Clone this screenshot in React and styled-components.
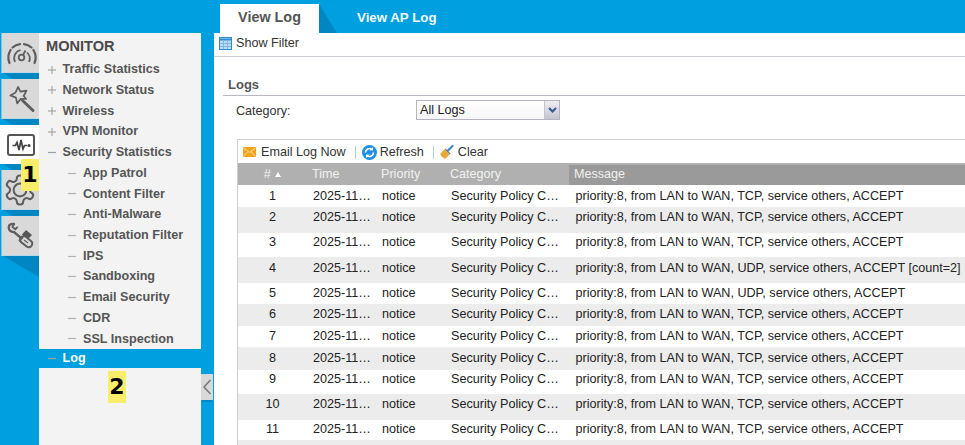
import React from "react";
import styled, { createGlobalStyle } from "styled-components";

const Global = createGlobalStyle`
  html, body { margin: 0; padding: 0; background: #009fdf; }
  * { box-sizing: border-box; }
  body { font-family: "Liberation Sans", Arial, sans-serif; font-size: 12.6px; }
`;

const Page = styled.div`
  position: relative;
  width: 965px;
  height: 445px;
  overflow: hidden;
  background: #009fdf;
  display: flex;
  flex-direction: column;
`;

const TabBar = styled.div`
  height: 33px;
  padding: 4px 0 0 220px;
  display: flex;
  flex: none;
`;

const ActiveTab = styled.div`
  position: relative;
  width: 99px;
  background: #fff;
  color: #555;
  font-weight: 700;
  font-size: 14.4px;
  line-height: 27px;
  text-align: center;
  &::after {
    content: "";
    position: absolute;
    left: 100%;
    top: 0;
    width: 18px;
    height: 29px;
    background: #0086c2;
    clip-path: polygon(0 0, 100% 100%, 0 100%);
  }
`;

const Tab = styled.div`
  margin-left: 38px;
  color: #f2fbff;
  font-weight: 700;
  font-size: 13.3px;
  line-height: 27px;
`;

const Body = styled.div`
  flex: 1;
  display: flex;
  min-height: 0;
`;

const Sidebar = styled.aside`
  width: 214px;
  flex: none;
  display: flex;
`;

const Rail = styled.nav`
  width: 39px;
  flex: none;
  display: flex;
  flex-direction: column;
`;

const Tile = styled.div`
  height: ${(p) => p.$h || 40}px;
  margin-left: ${(p) => (p.$active ? 0 : 1)}px;
  background: ${(p) => (p.$active ? "#fff" : "#d9d9d9")};
  border-left: ${(p) => (p.$active ? "none" : "1px solid #74c6e6")};
  border-bottom: ${(p) => (p.$active ? "none" : "1px solid #b9d9e6")};
  display: block;
  svg { display: block; }
`;

const Fold = styled.div`
  height: ${(p) => p.$h}px;
  margin-left: 3px;
  background: #0086c2;
  clip-path: polygon(0 0, 100% 0, 100% 100%, ${(p) => (p.$h > 10 ? "100%" : "10px")} 100%);
`;

const Menu = styled.div`
  width: 162px;
  flex: none;
  display: flex;
  flex-direction: column;
`;

const MenuTop = styled.div`
  background: #f3f3f3;
  height: 316px;
  padding-top: 3px;
`;

const MenuTitle = styled.div`
  height: 23.2px;
  padding-left: 7px;
  font-size: 14.6px;
  font-weight: 700;
  line-height: 21px;
  color: #4a4a4a;
`;

const MenuRow = styled.div`
  height: 20.72px;
  line-height: 20.72px;
  display: flex;
  align-items: center;
  padding-left: ${(p) => (p.$sub ? 29 : 9)}px;
  color: #555;
  font-weight: 700;
  font-size: 12.6px;
`;

const MenuLog = styled(MenuRow)`
  height: 19px;
  line-height: 19px;
  color: #fff;
`;

const Sign = styled.span`
  width: ${(p) => (p.$sub ? 15 : 14.5)}px;
  flex: none;
  font-weight: 400;
  display: flex;
  svg { display: block; }
`;

const MenuRest = styled.div`
  flex: 1;
  background: #f3f3f3;
`;

const CollapseColumn = styled.div`
  width: 13px;
  flex: none;
  padding-top: 341px;
  padding-right: 1px;
`;

const Collapse = styled.div`
  width: 12px;
  height: 26px;
  background: #d9d9d9;
  box-shadow: 0 3px 0 -1px #0086c2;
  svg { display: block; }
`;

const Main = styled.main`
  flex: 1;
  min-width: 0;
  background: #fff;
  overflow: hidden;
`;

const FilterBar = styled.div`
  height: 24px;
  border-bottom: 1px solid #cfcfd6;
  display: flex;
  align-items: center;
  gap: 4px;
  padding: 0 0 3px 5px;
  color: #333;
`;

const Section = styled.h2`
  margin: 20px 0 0 9px;
  padding: 0 0 3px 5px;
  height: 15px;
  box-sizing: content-box;
  border-bottom: 1px solid #b9b9c6;
  font-size: 13px;
  line-height: 15px;
  font-weight: 700;
  color: #555;
`;

const FormRow = styled.div`
  display: flex;
  align-items: flex-start;
  padding: 4px 0 0 22px;
  height: 24px;
  color: #333;
`;

const Label = styled.label`
  width: 180px;
  flex: none;
  line-height: 22px;
`;

const SelectBox = styled.div`
  width: 144px;
  height: 20px;
  display: flex;
  border: 1px solid #b4b4c4;
  background: linear-gradient(#fff, #f6f6f6);
  color: #222;
  line-height: 18px;
  padding-left: 3px;
`;

const SelectValue = styled.span`
  flex: 1;
`;

const SelectArrow = styled.span`
  width: 15px;
  border-left: 1px solid #c4c4d0;
  background: linear-gradient(#eeeef2, #c4c4cc);
  display: flex;
  align-items: center;
  justify-content: center;
`;

const Grid = styled.section`
  margin: 19px 0 0 23px;
  width: 760px;
  border-top: 1px solid #cfcfcf;
  border-left: 1px solid #cfcfcf;
`;

const GridTools = styled.div`
  height: 23px;
  display: flex;
  align-items: center;
  padding: 1px 0 0 5px;
  color: #333;
`;

const Tool = styled.span`
  display: flex;
  align-items: center;
  gap: ${(p) => p.$gap || 5}px;
  svg { display: block; }
`;

const Sep = styled.span`
  width: 1px;
  height: 13px;
  background: #a9cfe6;
  margin: 0 6px 0 9px;
`;

const COLS = "69px 69px 69px 124px 1fr";

const HeaderRow = styled.div`
  height: 22px;
  display: grid;
  grid-template-columns: ${COLS};
  background: #b0b0b0;
  padding-top: 2px;
  line-height: 19px;
`;

const HeaderCell = styled.div`
  color: #f0f0f0;
  padding-left: ${(p) => (p.$center ? 0 : 5)}px;
  text-align: ${(p) => (p.$center ? "center" : "left")};
  background: ${(p) => (p.$sorted ? "#9a9a9a" : "transparent")};
`;

const Arrow = styled.span`
  display: inline-block;
  margin-left: 1px;
  width: 0;
  height: 0;
  border: 3px solid transparent;
  border-bottom: 5px solid #fff;
  border-top: 0;
  vertical-align: 1px;
`;

const Row = styled.div`
  height: ${(p) => p.$h}px;
  padding-top: ${(p) => p.$top}px;
  display: grid;
  grid-template-columns: ${COLS};
  background: ${(p) => (p.$even ? "#ececec" : "#fff")};
  color: #222;
  line-height: 17px;
`;

const Cell = styled.div`
  padding: 0 4px 0 ${(p) => p.$left ?? 6}px;
  white-space: nowrap;
  overflow: hidden;
  text-overflow: ellipsis;
  text-align: ${(p) => (p.$center ? "center" : "left")};
`;

const Badge = styled.div`
  position: absolute;
  left: ${(p) => p.$x}px;
  top: ${(p) => p.$y}px;
  width: 18px;
  height: 32px;
  background: #f9ee6a;
  color: #000;
  font-family: "DejaVu Sans", sans-serif;
  font-weight: 700;
  font-size: 22px;
  line-height: 32px;
  text-align: center;
`;

const Plus = () => (
  <svg width="8" height="8" viewBox="0 0 8 8"><path d="M0 4h8M4 0v8" stroke="#999" strokeWidth="1" /></svg>
);
const Dash = ({ light, w = 8 }) => (
  <svg width={w} height="3" viewBox={`0 0 ${w} 3`}><path d={`M0 1.5h${w}`} stroke={light ? "#b5b5b5" : "#a0a0a0"} strokeWidth="1.2" /></svg>
);

const GaugeIcon = () => (
  <svg width="38" height="39" viewBox="0 0 38 39" fill="none" stroke="#5e5e5e" strokeWidth="2.2">
    <path d="M7.5 30A14 14 0 0 1 8.6 17M10.5 14.5A14 14 0 0 1 18 11.1M22 11.1A14 14 0 0 1 29.5 14.5M31.4 17A14 14 0 0 1 32.5 30" strokeLinecap="round" />
    <path d="M13 29A8.5 8.5 0 0 1 18.5 17M25 19.5A8.5 8.5 0 0 1 27 29" strokeWidth="1.7" />
    <circle cx="19.5" cy="24.5" r="2.8" strokeWidth="1.8" />
    <path d="M21 22l2.5-4.5" strokeWidth="1.8" />
  </svg>
);
const WandIcon = () => (
  <svg width="38" height="39" viewBox="0 0 38 39" fill="none" stroke="#5e5e5e" strokeWidth="2">
    <path d="M16 8l2.5 4.7 6-1-2.8 5.3 2.4 3-5.3-.2-3.6 4.6-1.3-5.8-5.5-2.2 5.2-3z" strokeLinejoin="round" strokeWidth="1.7" />
    <path d="M20.5 21.5l10.5 10" strokeWidth="3" strokeLinecap="round" />
  </svg>
);
const MonitorIcon = () => (
  <svg width="39" height="39" viewBox="0 0 39 39" fill="none">
    <rect x="8" y="10" width="26" height="20" rx="2" stroke="#555" strokeWidth="2" />
    <path d="M12.5 20.5h3l1.5-3 2 7.5 2-10 2 9 1.5-3.5h2.5" stroke="#444" strokeWidth="1.7" />
    <circle cx="29" cy="20.5" r="1.6" fill="#444" />
  </svg>
);
const GearIcon = () => (
  <svg width="37" height="40" viewBox="-0.41 -1.79 25.5 27.6" fill="none" stroke="#5e5e5e" strokeWidth="1.4">
    <path d="M12.22 2h-.44a2 2 0 0 0-2 2v.18a2 2 0 0 1-1 1.73l-.43.25a2 2 0 0 1-2 0l-.15-.08a2 2 0 0 0-2.73.73l-.22.38a2 2 0 0 0 .73 2.73l.15.1a2 2 0 0 1 1 1.72v.51a2 2 0 0 1-1 1.74l-.15.09a2 2 0 0 0-.73 2.73l.22.38a2 2 0 0 0 2.73.73l.15-.08a2 2 0 0 1 2 0l.43.25a2 2 0 0 1 1 1.73V20a2 2 0 0 0 2 2h.44a2 2 0 0 0 2-2v-.18a2 2 0 0 1 1-1.73l.43-.25a2 2 0 0 1 2 0l.15.08a2 2 0 0 0 2.73-.73l.22-.39a2 2 0 0 0-.73-2.73l-.15-.08a2 2 0 0 1-1-1.74v-.5a2 2 0 0 1 1-1.74l.15-.09a2 2 0 0 0 .73-2.73l-.22-.38a2 2 0 0 0-2.73-.73l-.15.08a2 2 0 0 1-2 0l-.43-.25a2 2 0 0 1-1-1.73V4a2 2 0 0 0-2-2z" />
    <circle cx="12" cy="12" r="4.4" />
  </svg>
);
const ToolsIcon = () => (
  <svg width="38" height="40" viewBox="0 0 38 40" fill="none" stroke="#5e5e5e">
    <path d="M12 8c-3-.6-5.3.8-5.3 3.4 0 3 2.4 5 5.3 4.6l6.5 5.5" strokeWidth="2.3" strokeLinecap="round" />
    <path d="M12 8l-1.5 3 2.8 2.2 2.4-2.4" strokeWidth="1.8" />
    <path d="M24 14l6 5-4 4-6-4.5z" fill="#555" stroke="none" />
    <path d="M21 21l-4 4" strokeWidth="2.2" />
    <rect x="17.5" y="22" width="13.5" height="7" rx="3.4" transform="rotate(38 24 25.5)" strokeWidth="2" />
    <path d="M22 24l4 3" strokeWidth="1.2" />
  </svg>
);

const FilterIcon = () => (
  <svg width="13" height="13" viewBox="0 0 13 13" style={{ display: "block" }}>
    <rect x="0.5" y="0.5" width="12" height="12" fill="#bcdcf2" stroke="#2f8ccc" />
    <path d="M0 2.5h13" stroke="#2f8ccc" strokeWidth="2" />
    <path d="M4.5 3v9M8.5 3v9M1 6.5h11M1 9.5h11" stroke="#7fb6e0" strokeWidth="1" />
  </svg>
);
const MailIcon = () => (
  <svg width="13" height="10" viewBox="0 0 13 10">
    <rect width="13" height="10" fill="#f5a31e" />
    <path d="M0.5 1l6 4.5 6-4.5M0.5 9.5l4.5-5M12.5 9.5l-4.5-5" fill="none" stroke="#ffe0a0" strokeWidth="1" />
  </svg>
);
const RefreshIcon = () => (
  <svg width="15" height="15" viewBox="0 0 15 15">
    <circle cx="7.5" cy="7.5" r="7.5" fill="#1f8fe0" />
    <path d="M3.5 7.5a4 4 0 0 1 6.2-3.3M11.5 7.5a4 4 0 0 1-6.2 3.3" fill="none" stroke="#fff" strokeWidth="1.7" />
    <path d="M10.8 2l.2 3.6-3.5-.3zM4.2 13l-.2-3.6 3.5.3z" fill="#fff" />
  </svg>
);
const BroomIcon = () => (
  <svg width="14" height="14" viewBox="0 0 14 14">
    <path d="M8 5.5L12.5 1" stroke="#3a86d0" strokeWidth="2.2" strokeLinecap="round" />
    <path d="M5.5 3.5l5 5-1 1-5-5z" fill="#7a7a7a" />
    <path d="M4.5 4.5l5 5-4 4.2c-2-.2-5-3-5.3-5z" fill="#e6a93a" />
  </svg>
);

const rowsSpec = [
  [22, 3, "TCP"], [26, 2, "TCP"], [24, 1, "TCP"], [26, 3, "UDP", " [count=2]"],
  [21, 2, "UDP"], [22, 2, "TCP"], [21, 2, "TCP"], [23, 3, "TCP"],
  [24, 1, "TCP"], [26, 2, "TCP"], [20, 1, "TCP"],
];

const topMenu = ["Traffic Statistics", "Network Status", "Wireless", "VPN Monitor"];
const subMenu = ["App Patrol", "Content Filter", "Anti-Malware", "Reputation Filter", "IPS", "Sandboxing", "Email Security", "CDR", "SSL Inspection"];

export default function App() {
  return (
    <Page>
      <Global />
      <TabBar>
        <ActiveTab>View Log</ActiveTab>
        <Tab>View AP Log</Tab>
      </TabBar>
      <Body>
        <Sidebar>
          <Rail>
            <Tile><GaugeIcon /></Tile>
            <Fold $h={6} />
            <Tile><WandIcon /></Tile>
            <Fold $h={6} />
            <Tile $active $h={39}><MonitorIcon /></Tile>
            <Fold $h={6} />
            <Tile><GearIcon /></Tile>
            <Fold $h={6} />
            <Tile><ToolsIcon /></Tile>
            <Fold $h={21} />
          </Rail>
          <Menu>
            <MenuTop>
              <MenuTitle>MONITOR</MenuTitle>
              {topMenu.map((t) => (
                <MenuRow key={t}><Sign><Plus /></Sign>{t}</MenuRow>
              ))}
              <MenuRow><Sign><Dash /></Sign>Security Statistics</MenuRow>
              {subMenu.map((t) => (
                <MenuRow key={t} $sub><Sign $sub><Dash light /></Sign>{t}</MenuRow>
              ))}
            </MenuTop>
            <MenuLog><Sign><Dash /></Sign>Log</MenuLog>
            <MenuRest />
          </Menu>
          <CollapseColumn>
            <Collapse>
              <svg width="12" height="26" viewBox="0 0 12 26" fill="none"><path d="M9.5 6L3 13l6.5 7" stroke="#777" strokeWidth="1.5" /></svg>
            </Collapse>
          </CollapseColumn>
        </Sidebar>
        <Main>
          <FilterBar><FilterIcon />Show Filter</FilterBar>
          <Section>Logs</Section>
          <FormRow>
            <Label>Category:</Label>
            <SelectBox>
              <SelectValue>All Logs</SelectValue>
              <SelectArrow>
                <svg width="9" height="6" viewBox="0 0 9 6"><path d="M1 1l3.5 3.5L8 1" fill="none" stroke="#2f5b94" strokeWidth="2" /></svg>
              </SelectArrow>
            </SelectBox>
          </FormRow>
          <Grid>
            <GridTools>
              <Tool><MailIcon />Email Log Now</Tool>
              <Sep />
              <Tool $gap={3}><RefreshIcon />Refresh</Tool>
              <Sep />
              <Tool $gap={4}><BroomIcon />Clear</Tool>
            </GridTools>
            <HeaderRow>
              <HeaderCell $center># <Arrow /></HeaderCell>
              <HeaderCell>Time</HeaderCell>
              <HeaderCell>Priority</HeaderCell>
              <HeaderCell>Category</HeaderCell>
              <HeaderCell $sorted>Message</HeaderCell>
            </HeaderRow>
            {rowsSpec.map(([h, top, proto, extra], i) => (
              <Row key={i} $h={h} $top={top} $even={i % 2 === 1}>
                <Cell $center $left={4}>{i + 1}</Cell>
                <Cell>2025-11-07 10:22:33</Cell>
                <Cell>notice</Cell>
                <Cell>Security Policy Control</Cell>
                <Cell $left={6.5}>priority:8, from LAN to WAN, {proto}, service others, ACCEPT{extra}</Cell>
              </Row>
            ))}
            <Row $h={20} $top={0} $even />
          </Grid>
        </Main>
      </Body>
      <Badge $x={21} $y={159}>1</Badge>
      <Badge $x={108} $y={371}>2</Badge>
    </Page>
  );
}
